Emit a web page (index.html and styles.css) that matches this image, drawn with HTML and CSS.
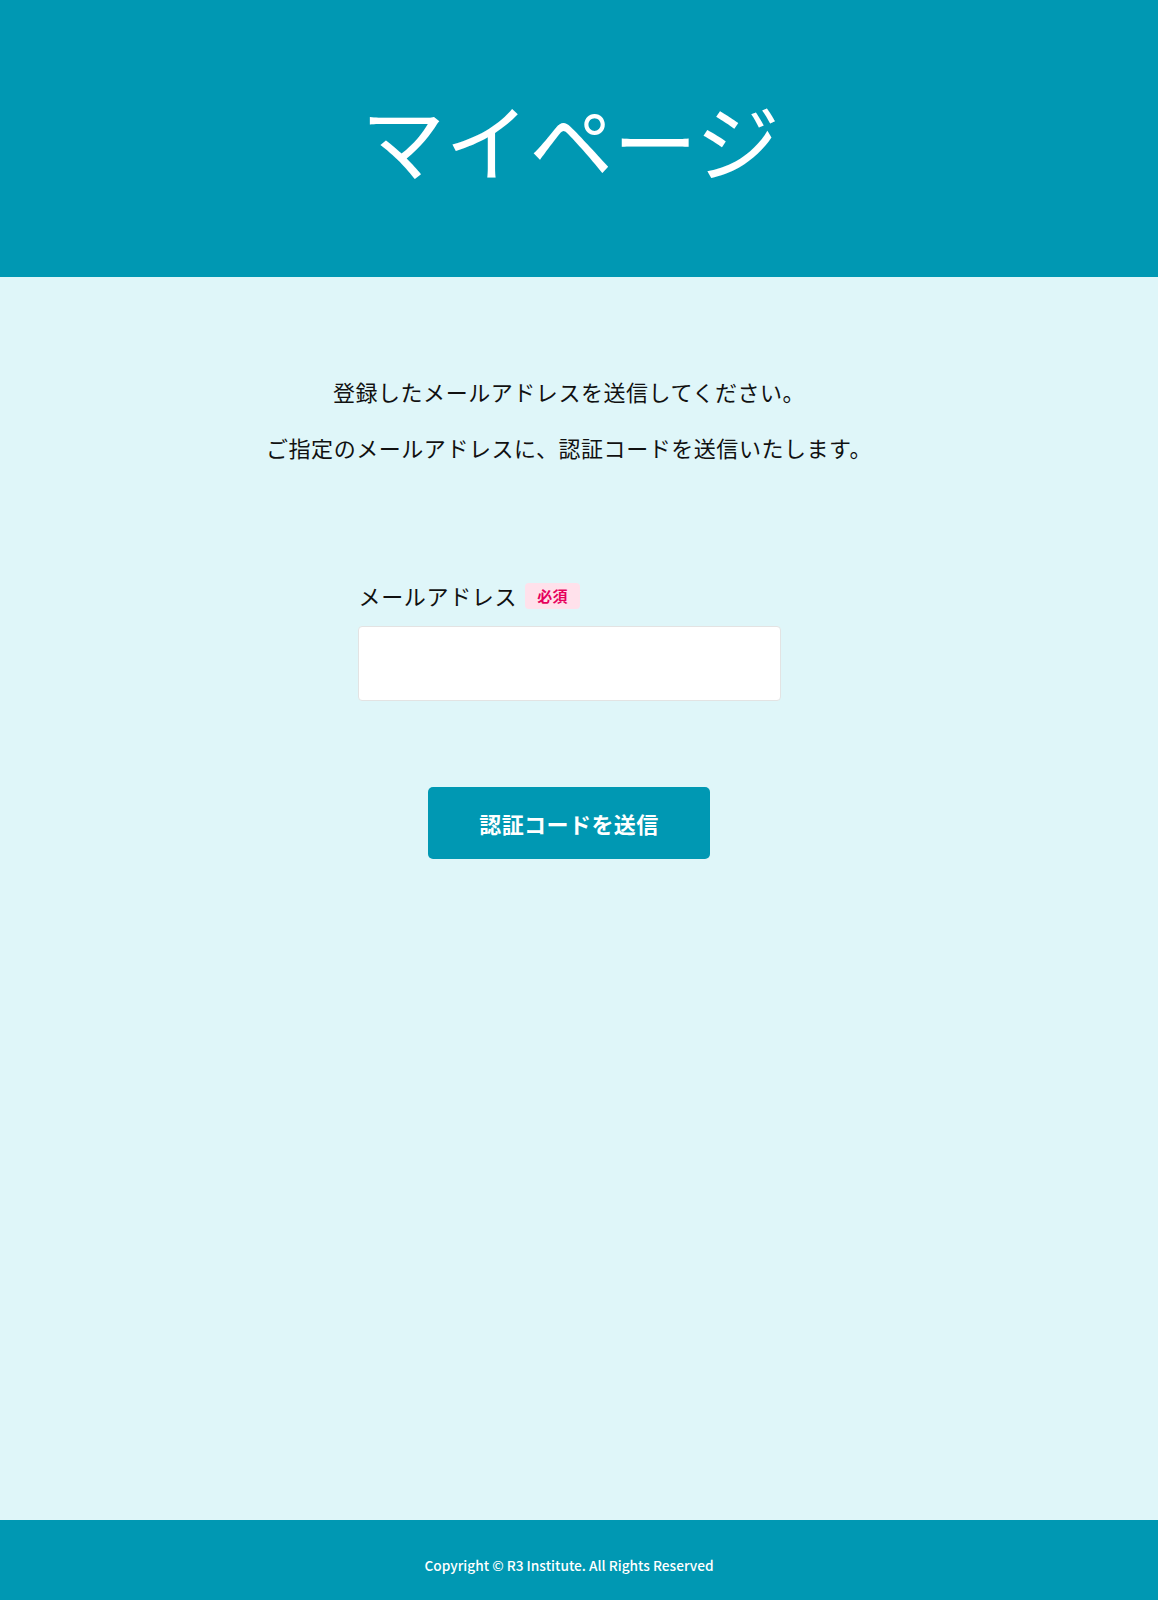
FILE: index.html
```html
<!DOCTYPE html>
<html lang="ja">
<head>
    <meta charset="UTF-8">
    <meta name="viewport" content="width=device-width, initial-scale=1.0">
    <title>マイページ</title>
    <link rel="stylesheet" href="styles.css">
</head>
<body>
    <header class="site-header">
        <div class="inner">
            <h1 class="page-title">マイページ</h1>
        </div>
    </header>

    <main class="site-main">
        <div class="inner">
            <div class="intro">
                <p>登録したメールアドレスを送信してください。</p>
                <p>ご指定のメールアドレスに、認証コードを送信いたします。</p>
            </div>

            <form class="code-form" onsubmit="return false;">
                <label class="field-label" for="email">
                    メールアドレス
                    <span class="required">必須</span>
                </label>
                <input class="text-input" type="email" id="email" name="email">
                <button class="submit-button" type="submit">認証コードを送信</button>
            </form>
        </div>
    </main>

    <footer class="site-footer">
        <div class="inner">
            <p class="copyright">Copyright © R3 Institute. All Rights Reserved</p>
        </div>
    </footer>
</body>
</html>
```

FILE: styles.css
```css
html, body {
    margin: 0;
    padding: 0;
}

body {
    min-height: 100vh;
    display: flex;
    flex-direction: column;
    background-color: #dff6f9;
    color: #111;
    font-family: "Noto Sans CJK JP", "Noto Sans", sans-serif;
}

.inner {
    padding-right: 20px; /* content sits a little left of centre */
}

.site-header {
    background-color: #0098b3;
    height: 277px;
    display: flex;
    align-items: center;
    justify-content: center;
}

.site-header .inner {
    width: 100%;
}

.page-title {
    margin: 0;
    color: #ffffff;
    font-size: 84px;
    font-weight: 400;
    line-height: 1;
    text-align: center;
    padding-left: 3px;
}

.site-main {
    flex: 1;
    padding-top: 97px;
}

.intro {
    display: flex;
    flex-direction: column;
    gap: 22px;
    text-align: center;
}

.intro p {
    margin: 0;
    font-size: 22px;
    line-height: 34px;
    letter-spacing: 0.025em;
}

.code-form {
    width: 423px;
    margin: 114px auto 0;
    display: flex;
    flex-direction: column;
}

.field-label {
    display: flex;
    align-items: center;
    gap: 8px;
    font-size: 22px;
    line-height: 34px;
    letter-spacing: 0.03em;
    padding-left: 1px;
}

.required {
    display: inline-block;
    background-color: #ffe1eb;
    color: #e6005c;
    font-size: 15px;
    font-weight: 700;
    line-height: 26px;
    letter-spacing: 0.02em;
    padding: 0 12px;
    border-radius: 4px;
    margin-top: 2px;
}

.text-input {
    margin-top: 14px;
    box-sizing: border-box;
    height: 75px;
    width: 100%;
    background-color: #fff;
    border: 1px solid #e3e3e3;
    border-radius: 4px;
    font-size: 20px;
    padding: 0 16px;
}

.submit-button {
    margin: 86px auto 0;
    width: 282px;
    height: 72px;
    background-color: #0098b3;
    color: #fff;
    border: none;
    border-radius: 5px;
    font-family: inherit;
    font-size: 22px;
    font-weight: 700;
    letter-spacing: 0.02em;
    cursor: pointer;
}

.site-footer {
    background-color: #0098b3;
    height: 80px;
    box-sizing: border-box;
    padding-top: 35px;
}

.copyright {
    margin: 0;
    color: #fff;
    font-size: 13.7px;
    font-weight: 500;
    line-height: 20px;
    text-align: center;
}
```
